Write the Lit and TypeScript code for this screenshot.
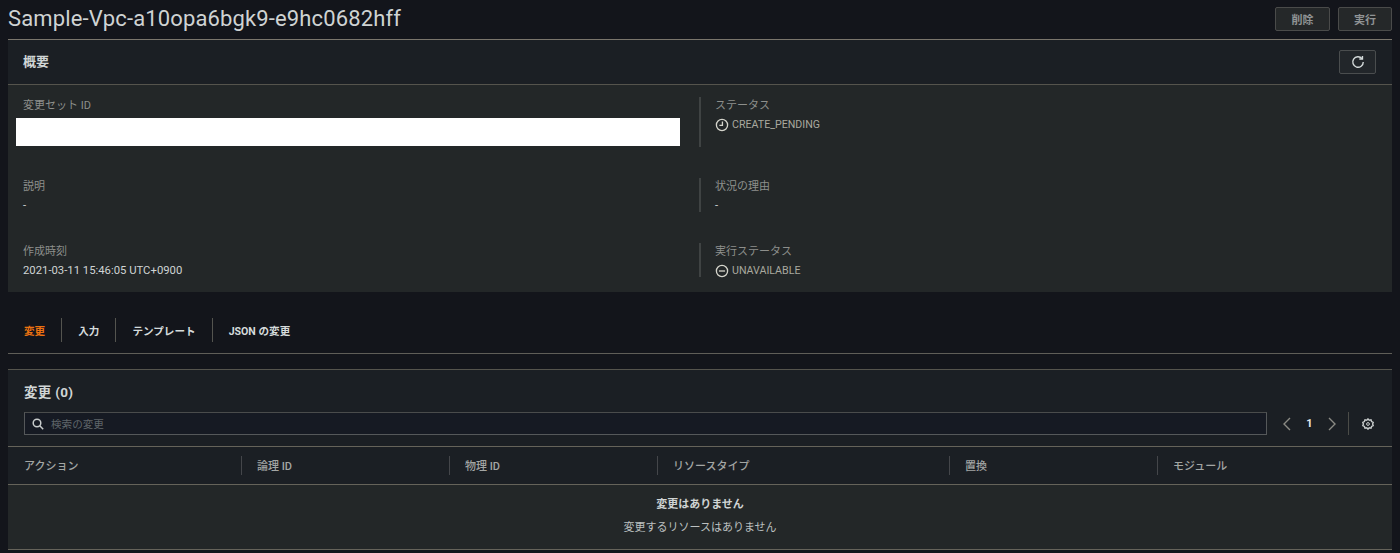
import { LitElement, html, css } from "lit";
import { customElement } from "lit/decorators.js";

const clock = html`<svg class="ic" viewBox="0 0 16 16"><circle cx="8" cy="8" r="6.4"/><path d="M8.5 4v4.5H5"/></svg>`;
const minus = html`<svg class="ic" viewBox="0 0 16 16"><circle cx="8" cy="8" r="6.4"/><path d="M4.5 8h7"/></svg>`;

@customElement("app-root")
export class AppRoot extends LitElement {
  static styles = css`
    :host { display: block; background: #13151b; height: 553px; overflow: hidden; color: #d5dbdb;
      font-family: "Roboto", "Noto Sans CJK JP", sans-serif; font-size: 11px; }
    .page { padding: 0 8px; }
    .top { height: 39px; display: flex; align-items: center; justify-content: space-between; border-bottom: 1px solid #7a756c; }
    h1 { margin: 0; font-size: 22px; font-weight: 400; color: #cfd3d3; line-height: 39px; position: relative; top: -1px; letter-spacing: 0.135px; }
    .btns { display: flex; gap: 8px; margin-top: -1px; }
    .btn { height: 24px; box-sizing: border-box; border: 1px solid #4a4b4a; border-radius: 2px; background: #252829; color: #8f9394; font-weight: 700; display: flex; align-items: center; justify-content: center; }
    .b1 { width: 55px; }
    .b2 { width: 54px; }
    .phead { height: 44px; background: #1b1f24; display: flex; align-items: center; justify-content: space-between; padding: 0 16px 0 15px; border-bottom: 1px solid #55544d; }
    .phead b { font-size: 13px; color: #d0d5d5; position: relative; top: -2px; }
    .refresh { width: 37px; height: 24px; box-sizing: border-box; border: 1px solid #4a4d4e; border-radius: 2px; display: flex; align-items: center; justify-content: center; background: #22262a; }
    .refresh svg { width: 14px; height: 14px; fill: none; stroke: #d5dbdb; stroke-width: 1.6; }
    .body { background: #232728; padding: 12px 15px 15px; display: grid; grid-template-columns: 676px 1fr; grid-template-rows: 50px 34px 34px; row-gap: 31px; height: 207px; box-sizing: border-box; }
    .cell { line-height: 15px; display: flex; flex-direction: column; gap: 4px; }
    .cell.r { border-left: 2px solid #3f4343; padding-left: 14px; }
    .lab { color: #8d8f8c; margin-top: 1px; }
    .val { color: #cfd4d4; display: flex; align-items: center; gap: 3px; font-size: 11.3px; }
    .val.st { color: #a9a99f; font-size: 10.65px; }
    .redact { height: 28px; width: 664px; margin-left: -7px; margin-top: 1px; background: #fff; }
    .ic { width: 14px; height: 14px; fill: none; stroke: #d5d5cc; stroke-width: 1.5; flex: none; }
    .tabs { height: 62px; display: flex; align-items: center; border-bottom: 1px solid #5f5e58; box-sizing: border-box; margin-bottom: 15px; padding-top: 15px; }
    .tab { padding: 0 16px; height: 24px; display: flex; align-items: center; font-weight: 700; font-size: 10.6px; color: #d5dbdb; border-left: 1px solid #54544f; }
    .tab:first-child { border-left: none; color: #ec7211; }
    .panel2 { border-top: 1px solid #55544d; background: #1b1f24; }
    .p2top { padding: 13px 16px 11px; }
    .p2top h2 { margin: 0; font-size: 13.5px; font-weight: 700; color: #d0d5d5; line-height: 18px; letter-spacing: 0.3px; }
    .tools { display: flex; align-items: center; margin: 11px 2px 0 0; }
    .search { flex: 1; height: 23px; box-sizing: border-box; background: #161a23; border: 1px solid #55585a; border-top-color: #4a4c4c; display: flex; align-items: center; gap: 7px; padding-left: 7px; color: #5f6569; font-size: 10.6px; }
    .search svg { width: 12px; height: 12px; fill: none; stroke: #c8cccc; stroke-width: 1.5; flex: none; }
    .pager { display: flex; align-items: center; width: 81px; height: 23px; padding-left: 16px; box-sizing: border-box; }
    .pager svg { fill: none; stroke: #8a8a84; stroke-width: 1.4; width: 8px; height: 14px; flex: none; }
    .pager .one { flex: none; width: 37px; text-align: center; font-weight: 700; color: #e4e8e8; }
    .vsep { width: 1px; height: 23px; background: #4b4c48; }
    .gear { width: 12px; height: 12px; margin-left: 13px; fill: none; stroke: #c8cccc; stroke-width: 2; flex: none; }
    .thead { display: grid; grid-template-columns: 233px 208px 208px 292px 208px 1fr; align-items: center; border-top: 1px solid #65635a; border-bottom: 1px solid #65635a; height: 37px; color: #a3a6a4; font-weight: 500; }
    .thead > div { height: 19px; line-height: 19px; padding-left: 15px; border-left: 1px solid #44464a; }
    .thead > div:first-child { border-left: none; padding-left: 16px; }
    .thead span { position: relative; top: 1px; }
    .tbody { background: #232728; height: 64px; border-bottom: 1px solid #65635a; line-height: 15px; display: flex; flex-direction: column; align-items: center; gap: 8px; }
    .tbody b { margin-top: 12px; color: #cfd4d4; }
    .tbody span { color: #bcc0c0; }
  `;

  private cell(label: string, value: unknown, right = false) {
    return html`<div class="cell ${right ? "r" : ""}"><div class="lab">${label}</div>${value}</div>`;
  }

  render() {
    return html`<div class="page">
      <div class="top">
        <h1>Sample-Vpc-a10opa6bgk9-e9hc0682hff</h1>
        <div class="btns"><div class="btn b1">削除</div><div class="btn b2">実行</div></div>
      </div>
      <div class="phead"><b>概要</b>
        <div class="refresh"><svg viewBox="0 0 16 16"><path d="M12.6 4.2A6 6 0 1 0 14 8"/><path d="M9.5 4.6h3.6V1" /></svg></div>
      </div>
      <div class="body">
        ${this.cell("変更セット ID", html`<div class="redact"></div>`)}
        ${this.cell("ステータス", html`<div class="val st">${clock}CREATE_PENDING</div>`, true)}
        ${this.cell("説明", html`<div class="val">-</div>`)}
        ${this.cell("状況の理由", html`<div class="val">-</div>`, true)}
        ${this.cell("作成時刻", html`<div class="val">2021-03-11 15:46:05 UTC+0900</div>`)}
        ${this.cell("実行ステータス", html`<div class="val st">${minus}UNAVAILABLE</div>`, true)}
      </div>
      <div class="tabs">
        <div class="tab">変更</div><div class="tab">入力</div><div class="tab">テンプレート</div><div class="tab">JSON の変更</div>
      </div>
      <div class="panel2">
        <div class="p2top">
          <h2>変更 (0)</h2>
          <div class="tools">
            <div class="search">
              <svg viewBox="0 0 12 12"><circle cx="5" cy="5" r="3.8"/><path d="M7.8 7.8 11.2 11.2"/></svg>
              検索の変更
            </div>
            <div class="pager">
              <svg viewBox="0 0 8 14"><path d="M7 1 1 7l6 6"/></svg>
              <span class="one">1</span>
              <svg viewBox="0 0 8 14"><path d="m1 1 6 6-6 6"/></svg>
            </div>
            <div class="vsep"></div>
            <svg class="gear" viewBox="0 0 12 12"><circle cx="6" cy="6" r="1.4" stroke-width="1"/><path stroke-width="1.4" d="M6 .9 7.2 2.2 9 1.9 9.6 3.6 11.2 4.4 10.6 6 11.2 7.6 9.6 8.4 9 10.1 7.2 9.8 6 11.1 4.8 9.8 3 10.1 2.4 8.4.8 7.6 1.4 6 .8 4.4 2.4 3.6 3 1.9 4.8 2.2Z"/></svg>
          </div>
        </div>
        <div class="thead">
          <div><span>アクション</span></div><div><span>論理 ID</span></div><div><span>物理 ID</span></div><div><span>リソースタイプ</span></div><div><span>置換</span></div><div><span>モジュール</span></div>
        </div>
        <div class="tbody"><b>変更はありません</b><span>変更するリソースはありません</span></div>
      </div>
    </div>`;
  }
}
